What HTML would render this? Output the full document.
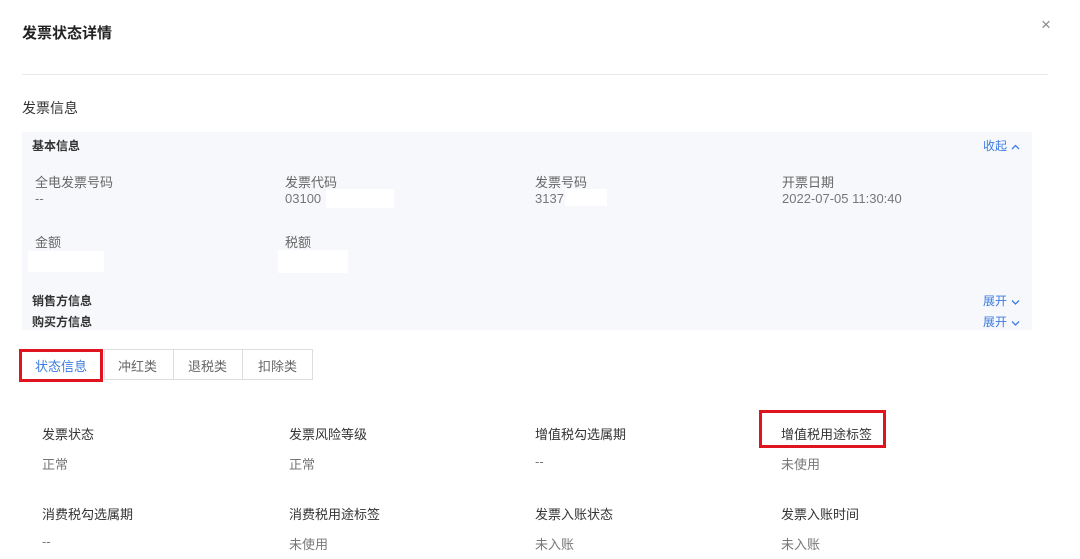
<!DOCTYPE html>
<html><head><meta charset="utf-8"><style>
*{margin:0;padding:0;box-sizing:border-box}
body{width:1080px;height:559px;overflow:hidden;background:#fff;font-family:"Liberation Sans","Noto Sans CJK SC",sans-serif;color:#333;position:relative}
.a{position:absolute;white-space:nowrap}
.t{font-size:13px;color:#666}
.v{font-size:13px;color:#777}
.b{font-size:12px;font-weight:bold;color:#333}
.blue{color:#3c7be0;font-size:12px}
.s{font-size:13px;color:#333}
.w{position:absolute;background:#fff}
.blue svg{vertical-align:middle;margin-left:4px}
</style></head><body>
<div class="a" style="left:22px;top:22px;font-size:15px;font-weight:bold;color:#222">发票状态详情</div>
<div class="a" style="left:1041px;top:15px;font-size:17px;color:#888;font-family:'Liberation Sans',sans-serif">×</div>
<div class="a" style="left:22px;top:74px;width:1026px;height:1px;background:#e8e8e8"></div>
<div class="a" style="left:22px;top:98px;font-size:14px;color:#333">发票信息</div>
<div class="a" style="left:22px;top:132px;width:1010px;height:198px;background:#f6f8fb"></div>
<div class="a b" style="left:32px;top:137px">基本信息</div>
<div class="a blue" style="left:983px;top:137px">收起<svg width="9" height="6" viewBox="0 0 9 6"><path d="M1 5L4.5 1.5L8 5" fill="none" stroke="#3c7be0" stroke-width="1.3"/></svg></div>
<div class="a t" style="left:35px;top:172px">全电发票号码</div>
<div class="a v" style="left:35px;top:191px">--</div>
<div class="a t" style="left:285px;top:172px">发票代码</div>
<div class="a v" style="left:285px;top:191px">03100</div>
<div class="w" style="left:326px;top:189px;width:68px;height:19px"></div>
<div class="a t" style="left:535px;top:172px">发票号码</div>
<div class="a v" style="left:535px;top:191px">3137</div>
<div class="w" style="left:565px;top:189px;width:42px;height:17px"></div>
<div class="a t" style="left:782px;top:172px">开票日期</div>
<div class="a v" style="left:782px;top:191px">2022-07-05 11:30:40</div>
<div class="a t" style="left:35px;top:232px">金额</div>
<div class="w" style="left:28px;top:251px;width:76px;height:21px"></div>
<div class="a t" style="left:285px;top:232px">税额</div>
<div class="w" style="left:278px;top:250px;width:70px;height:23px"></div>
<div class="a b" style="left:32px;top:292px">销售方信息</div>
<div class="a b" style="left:32px;top:313px">购买方信息</div>
<div class="a blue" style="left:983px;top:292px">展开<svg width="9" height="6" viewBox="0 0 9 6"><path d="M1 1.5L4.5 5L8 1.5" fill="none" stroke="#3c7be0" stroke-width="1.3"/></svg></div>
<div class="a blue" style="left:983px;top:313px">展开<svg width="9" height="6" viewBox="0 0 9 6"><path d="M1 1.5L4.5 5L8 1.5" fill="none" stroke="#3c7be0" stroke-width="1.3"/></svg></div>
<div class="a" style="left:104px;top:349px;width:209px;height:31px;border:1px solid #ddd"></div>
<div class="a" style="left:173px;top:349px;width:1px;height:31px;background:#ddd"></div>
<div class="a" style="left:242px;top:349px;width:1px;height:31px;background:#ddd"></div>
<div class="a" style="left:19px;top:349px;width:84px;height:33px;border:3px solid #e0141e;background:#fff"></div>
<div class="a" style="left:35px;top:356px;font-size:13px;color:#3c7be0">状态信息</div>
<div class="a t" style="left:118px;top:356px">冲红类</div>
<div class="a t" style="left:188px;top:356px">退税类</div>
<div class="a t" style="left:258px;top:356px">扣除类</div>
<div class="a" style="left:759px;top:410px;width:127px;height:38px;border:3px solid #e0141e"></div>
<div class="a s" style="left:42px;top:424px">发票状态</div>
<div class="a v" style="left:42px;top:454px">正常</div>
<div class="a s" style="left:289px;top:424px">发票风险等级</div>
<div class="a v" style="left:289px;top:454px">正常</div>
<div class="a s" style="left:535px;top:424px">增值税勾选属期</div>
<div class="a v" style="left:535px;top:454px">--</div>
<div class="a s" style="left:781px;top:424px">增值税用途标签</div>
<div class="a v" style="left:781px;top:454px">未使用</div>
<div class="a s" style="left:42px;top:504px">消费税勾选属期</div>
<div class="a v" style="left:42px;top:534px">--</div>
<div class="a s" style="left:289px;top:504px">消费税用途标签</div>
<div class="a v" style="left:289px;top:534px">未使用</div>
<div class="a s" style="left:535px;top:504px">发票入账状态</div>
<div class="a v" style="left:535px;top:534px">未入账</div>
<div class="a s" style="left:781px;top:504px">发票入账时间</div>
<div class="a v" style="left:781px;top:534px">未入账</div>
</body></html>
